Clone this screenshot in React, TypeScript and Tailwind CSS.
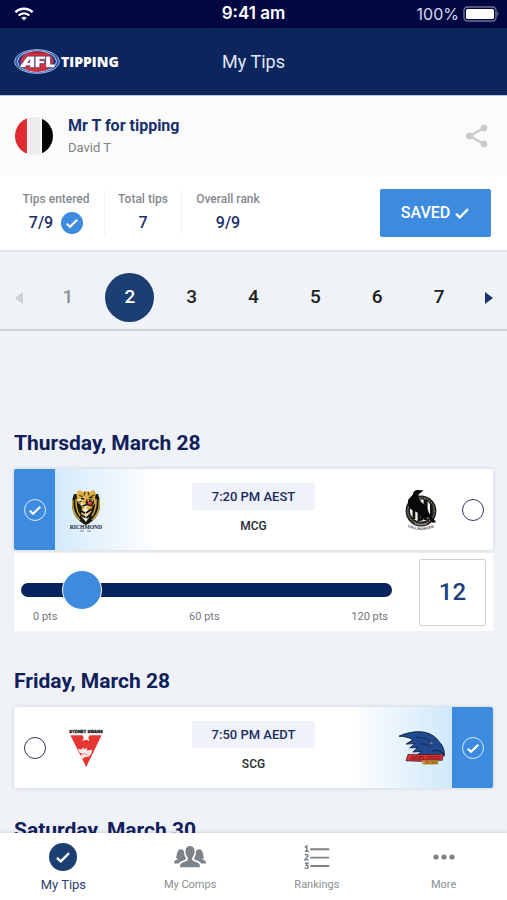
import { useState } from "react";
import type { ReactNode } from "react";
import clsx from "clsx";

const ROUNDS = [1, 2, 3, 4, 5, 6, 7];

function Check({ className }: { className?: string }) {
  return (
    <svg viewBox="0 0 16 16" fill="none" className={className} aria-hidden="true">
      <path d="M2 8.8 5.8 12.400 14 4.200" stroke="currentColor" strokeWidth="2.400" />
    </svg>
  );
}

function StatusBar() {
  return (
    <div className="grid h-7 shrink-0 grid-cols-3 items-center bg-[#020742] px-2 text-white">
      <svg viewBox="0 0 20 14" className="ml-1.5 h-3.5 w-5" fill="none" stroke="#fff" strokeWidth="2.4" aria-hidden="true">
        <path d="M1.4 5.2C6.2.5 13.8.5 18.6 5.2" />
        <path d="M4.6 8.5c3-2.9 7.8-2.9 10.8 0" />
        <path d="M7.3 10.7c1.6-1.4 3.8-1.4 5.4 0L10 13.6z" fill="#fff" stroke="none" />
      </svg>
      <span className="text-center font-['Inter',sans-serif] text-[17px] font-semibold whitespace-nowrap">9:41 am</span>
      <span className="flex items-center justify-end gap-1 font-['Inter',sans-serif] text-base text-[#d6daf0]">
        100%
        <svg viewBox="0 0 36 16" className="h-4 w-9" aria-hidden="true">
          <rect x="1" y="1" width="32" height="14" rx="3.5" fill="none" stroke="#6d7194" strokeWidth="1.4" />
          <rect x="3" y="3" width="28" height="10" rx="1.5" fill="#fff" />
          <path d="M34.3 5.6c1.6.8 1.6 4 0 4.8z" fill="#6d7194" />
        </svg>
      </span>
    </div>
  );
}

function AflLogo() {
  return (
    <svg viewBox="0 0 46 25" className="h-[25px] w-[46px]" role="img" aria-label="AFL">
      <ellipse cx="23" cy="12.5" rx="22.3" ry="11.8" fill="#2a56a8" stroke="#9fb8e8" strokeWidth="1" />
      <ellipse cx="23" cy="12.5" rx="19.6" ry="10.6" fill="#1c3f8d" stroke="#c9d8f5" strokeWidth=".9" />
      <ellipse cx="23" cy="12.5" rx="16.5" ry="10.2" fill="#d22f41" />
      <path d="M17 3.6h12M19 2.2v2.8M22 2v3M25 2v3M28 2.2v2.8" stroke="#8f2138" strokeWidth=".7" />
      <g fill="#fff" stroke="#17306f" strokeWidth=".5">
        <path d="M5 18.4 13.200 7.200h7.400v11.200h-4.800v-2h-3.300l-1.400 2zM13.700 13.600h2.100v-2.900z" fillRule="evenodd" />
        <path d="M21.200 7.200h10.200v3h-5.600v1.500h4.600v2.800h-4.600v3.900h-4.600z" />
        <path d="M31.800 7.200h4.600v8h4.600v3.200h-9.200z" />
      </g>
    </svg>
  );
}

function RichmondLogo() {
  return (
    <svg viewBox="0 0 34 44" className="h-11 w-[34px]" role="img" aria-label="Richmond">
      <path d="M5 6c8 1 16 1 24 0 4 10 3 24-12 31C2 30 1 16 5 6z" fill="#1a1812" />
      <path d="M3.800 12c-.7 8 1.200 15 7.200 20M30.200 12c.7 8-1.200 15-7.200 20M7 11c-.3 7 .6 12 4 17M27 11c.3 7-.6 12-4 17" stroke="#c9a437" strokeWidth="1.500" fill="none" />
      <path d="M7.500 4.500 10 2l4 1.800c2-.8 5-.8 7 0L25 1.800l2 3.700-1 4.200 1.400 5-4 3-1.200 6L17 34l-5-6 1-9-5-6z" fill="#dcb142" />
      <path d="M8.500 12c2-2 4-1.500 5.500.5L12 17l4 2-3 5 4 2-4 3 4 4.500 3-4-1-3 2-4-4-2 2-4-5-1z" fill="#f5f1e2" />
      <path d="M10 7.500l3.500 1M16 3.800l-1 3.500M19 3.800l1 3.500M25.500 7l-3.500 1.400M10 14l3-1" stroke="#3a2e12" strokeWidth="1.100" />
      <path d="M11 22.500l5 2.500M12 27l4.500 2.500M22.500 21l-5.500 4M22.500 25.500l-5 4.500M13.500 18l4.500-1.500" stroke="#15130f" strokeWidth="1.700" />
      <path d="M12 10.500l3 .5M20 9.800l3.500-.6" stroke="#15130f" strokeWidth="1.400" />
      <path d="M17.500 11.500h7l.8 3.200-2.800 3.800-4.500-1.200-1.400-3z" fill="#3b1a14" />
      <path d="M18.800 14l4.200-.4-.7 3.100-3-.5z" fill="#d5543f" />
      <path d="M18.200 12l1 2 .8-2zM22.500 12l.8 1.800.8-1.800z" fill="#fff" />
      <text x="17" y="41" textAnchor="middle" fontFamily="Liberation Serif, serif" fontWeight="700" fontSize="5.600" fill="#15202e">RICHMOND</text>
      <path d="M11 43h4M18 43h4" stroke="#7c8791" strokeWidth="1" />
    </svg>
  );
}

function CollingwoodLogo() {
  return (
    <svg viewBox="0 0 34 44" className="h-11 w-[34px]" role="img" aria-label="Collingwood">
      <circle cx="17" cy="23" r="15.400" fill="#24231f" />
      <circle cx="17" cy="23" r="13.200" fill="none" stroke="#88857a" strokeWidth="1.200" strokeDasharray="1.600 1" />
      <circle cx="17" cy="22.500" r="11" fill="#f4f4f2" />
      <path d="M8.500 17h2.800v14H8.500zM13.600 12h3.200v21h-3.200zM19.600 12h4v20h-4zM26 16h2.400v12H26z" fill="#141414" />
      <path d="M19.500 2.600 14.500 2c-3.200-.3-5.400 1.200-5.700 4.500L4.400 11.600c-1.400 4 .2 8.600 4.600 11l6.500 3 1.800 4.400-3.500 2.600h5l1.400-3 4-.2 4 5.400 4-.6-7.400-9.400c-1.200-5-4.300-8.600-9.600-12.400l-.7-5.800z" fill="#080808" />
      <path d="M11 35.600q6 2.200 12 0" stroke="#8b897f" strokeWidth="1.200" fill="none" />
      <path id="collingwood-ribbon" d="M2 38q15 8 30 0" fill="none" />
      <text fontFamily="Liberation Sans, sans-serif" fontWeight="700" fontSize="3.600" fill="#444">
        <textPath href="#collingwood-ribbon" startOffset="50%" textAnchor="middle">COLLINGWOOD</textPath>
      </text>
    </svg>
  );
}

function SydneyLogo() {
  return (
    <svg viewBox="0 0 34 40" className="h-10 w-[34px]" role="img" aria-label="Sydney Swans">
      <text x="17" y="5" textAnchor="middle" fontFamily="Liberation Sans, sans-serif" fontWeight="700" fontSize="4.200" fill="#111" stroke="#111" strokeWidth=".3">SYDNEY SWANS</text>
      <path d="M1.400 7.200h12l1.400 2.600-1.400 3 3.600-1 3.600 1-1.400-3 1.400-2.600h12L17.200 39z" fill="#e63633" />
      <path d="M8.800 21l3.600.4 1.800-2.200.8 2.400 3.400-2-.8 3 5.600-.8-1.200 4.600-2.400 2.200-4 .6-2 1.800-2.200-3.600 2.200-1.800-2.600-.6z" fill="#fbeceb" />
      <path d="M13 27l2.500-2 1.200 2 3-1.800" stroke="#e98e8a" strokeWidth=".9" fill="none" />
    </svg>
  );
}

function AdelaideLogo() {
  return (
    <svg viewBox="0 0 48 34" className="h-[34px] w-12" role="img" aria-label="Adelaide Crows">
      <path d="M1 5.2C8 2 15 .4 22.600.8c8.400.4 14.600 4.400 18 9.400 3.600 3.200 6 8 5.800 14.600L43 22l-4.600 1.600-18.600-.2 3.800-3-8.800.6 5-4.400-8 .2 5.400-4.200-9 .4 7-4.400C10 6.200 5.600 5.200 1 5.200z" fill="#1f4a90" stroke="#16294f" strokeWidth="1" />
      <path d="M18 6.400c6-.4 12 1 15.500 5.200M21 13c4-.4 8 .6 11 3.200" stroke="#183566" strokeWidth="1.200" fill="none" />
      <path d="M31.500 10.800l3.500 1.200-1.600 1z" fill="#c99c4a" />
      <path d="M34 20.500c4-2 8-1.500 11.500 2.500" stroke="#16294f" strokeWidth="1.200" fill="none" />
      <path d="M10 23.400h35.600l-1.400 5.800-19 1.200-17.200-.6z" fill="#d8322f" stroke="#3a2348" strokeWidth=".8" />
      <text x="27" y="28.800" textAnchor="middle" fontFamily="Liberation Sans, sans-serif" fontStyle="italic" fontWeight="700" fontSize="6" fill="#8b1820">ADELAIDE</text>
      <path d="M24 29.600h17l-1.400 3.600H24.800z" fill="#e8b33f" stroke="#9c7a34" strokeWidth=".5" />
      <text x="32.400" y="32.800" textAnchor="middle" fontFamily="Liberation Sans, sans-serif" fontWeight="700" fontSize="3.600" fill="#7b3a20">CROWS</text>
    </svg>
  );
}

function Stat({ label, className, children }: { label: string; className?: string; children: ReactNode }) {
  return (
    <div className={clsx("flex h-11 flex-col items-center justify-between", className)}>
      <dt className="text-xs leading-4 font-medium whitespace-nowrap text-[#85888f]">{label}</dt>
      <dd className="flex items-center gap-2 text-base leading-6 font-medium text-[#1c2f66]">{children}</dd>
    </div>
  );
}

interface PickProps {
  game: string;
  team: string;
  checked: boolean;
  onPick: () => void;
}

function Pick({ game, team, checked, onPick }: PickProps) {
  return (
    <label className={clsx("relative flex w-[41px] items-center justify-center", checked && "bg-[#3d8bdf]")}>
      <input
        type="radio"
        name={game}
        aria-label={team}
        checked={checked}
        onChange={onPick}
        className="size-[22px] appearance-none rounded-full border-[1.5px] border-[#33376b] checked:border-[#d9ecff]"
      />
      {checked && <Check className="pointer-events-none absolute size-3.5 text-white" />}
    </label>
  );
}

interface MatchProps {
  id: string;
  time: string;
  venue: string;
  home: string;
  away: string;
  homeLogo: ReactNode;
  awayLogo: ReactNode;
  tip: "home" | "away";
}

function Match({ id, time, venue, home, away, homeLogo, awayLogo, tip }: MatchProps) {
  const [pick, setPick] = useState(tip);

  return (
    <div className="flex h-[81px] overflow-hidden rounded-xs bg-white shadow-[0_0_4px_rgba(40,60,100,0.18)]">
      <Pick game={id} team={home} checked={pick === "home"} onPick={() => setPick("home")} />
      <div
        className={clsx(
          "flex w-[100px] items-center pl-3.5",
          pick === "home" && "bg-linear-to-r from-[#d3eafb] to-white",
        )}
      >
        {homeLogo}
      </div>
      <div className="flex flex-1 flex-col items-center justify-center gap-1.5">
        <span className="w-[123px] rounded-xs bg-[#eff2f8] text-center text-[13px] leading-[27px] font-medium text-[#1b2c63]">
          {time}
        </span>
        <span className="text-xs leading-5 font-medium text-[#25272e]">{venue}</span>
      </div>
      <div
        className={clsx(
          "flex w-[100px] items-center justify-end",
          pick === "away" ? "bg-linear-to-l from-[#cfe8fa] to-white pr-1.5" : "pr-3.5",
        )}
      >
        {awayLogo}
      </div>
      <Pick game={id} team={away} checked={pick === "away"} onPick={() => setPick("away")} />
    </div>
  );
}

function Margin() {
  const [margin, setMargin] = useState(12);

  return (
    <div className="mt-[3px] flex h-[78px] items-center bg-white px-[7px]">
      <div className="flex-1 pt-6">
        <div className="flex h-3.5 items-center rounded-full bg-[#08245e] px-2.5">
          <input
            type="range"
            min={0}
            max={120}
            value={margin}
            aria-label="Winning margin"
            onChange={(e) => setMargin(Number(e.target.value))}
            className="h-10 w-full appearance-none bg-transparent [&::-webkit-slider-thumb]:size-10 [&::-webkit-slider-thumb]:appearance-none [&::-webkit-slider-thumb]:rounded-full [&::-webkit-slider-thumb]:border [&::-webkit-slider-thumb]:border-white [&::-webkit-slider-thumb]:bg-[#3d8bdf]"
          />
        </div>
        <div className="mt-3 flex justify-between pr-1 pl-3 text-[11px] leading-4 text-[#74777d]">
          <span>0 pts</span>
          <span>60 pts</span>
          <span>120 pts</span>
        </div>
      </div>
      <input
        type="text"
        inputMode="numeric"
        aria-label="Margin in points"
        value={margin}
        onChange={(e) => setMargin(Number(e.target.value) || 0)}
        className="ml-[27px] size-[67px] rounded-xs border-[1.5px] border-[#cfd2d6] text-center text-2xl font-medium text-[#1b3f7b]"
      />
    </div>
  );
}

function DayHeading({ children }: { children: ReactNode }) {
  return <h2 className="mb-3 text-[21px] leading-7 font-bold text-[#10205b]">{children}</h2>;
}

function CompsIcon() {
  return (
    <svg viewBox="0 0 32 22" className="h-[22px] w-8" fill="currentColor" aria-hidden="true">
      <path d="M16 0c3 0 4.600 2 4.600 5 0 2.600-.9 5-2.300 6.400-.3 1.800-.1 2.900 1.200 3.500l4.400 1.800c1.600.7 2.100 2.400 2.100 4.500H6c0-2.100.5-3.800 2.100-4.500l4.400-1.800c1.300-.6 1.500-1.700 1.200-3.500C12.300 10 11.400 7.600 11.400 5c0-3 1.600-5 4.600-5z" />
      <path d="M6.400 3.200c1.800 0 3 .7 3.600 2 0 2.800.7 5.200 2 7.100-.2.800-.5 1.200-1.100 1.500l-4 1.700c-1 .5-1.600 1.100-2 1.900H0c0-1.800.6-3 1.900-3.500l2.500-1c-1-.1-1.900-.4-2.500-.9C3.200 10.500 2.400 3.200 6.400 3.200z" />
      <path d="M25.600 3.200c-1.800 0-3 .7-3.600 2 0 2.800-.7 5.200-2 7.100.2.800.5 1.200 1.100 1.500l4 1.700c1 .5 1.600 1.100 2 1.900H32c0-1.800-.6-3-1.900-3.500l-2.500-1c1-.1 1.900-.4 2.500-.9-1.300-1.500-.5-8.800-4.500-8.800z" />
    </svg>
  );
}

function RankingsIcon() {
  return (
    <svg viewBox="0 0 26 24" className="h-6 w-[26px]" fill="none" stroke="currentColor" aria-hidden="true">
      <path d="M7 4.200h17.500M7 12.600h17.500M7 21h17.500" strokeWidth="1.900" strokeLinecap="round" />
      <path d="M.8 2.400 2.800 1v5.300M.8 6.300h4M.9 10.300c.8-1.300 3.400-1 3 .7C3.600 12.200 1.600 13 1 14.700h3.500M.9 18.200h3L2.300 20.200c2.400 0 2.500 3.300.2 3.300-.8 0-1.400-.3-1.700-.8" strokeWidth="1.500" />
    </svg>
  );
}

const TABS = [
  {
    label: "My Tips",
    icon: (
      <span className="flex size-7 items-center justify-center rounded-full bg-[#1b3f73]">
        <Check className="size-4 text-white" />
      </span>
    ),
  },
  { label: "My Comps", icon: <CompsIcon /> },
  { label: "Rankings", icon: <RankingsIcon /> },
  {
    label: "More",
    icon: (
      <svg viewBox="0 0 22 6" className="h-1.5 w-[22px]" fill="currentColor" aria-hidden="true">
        <circle cx="3" cy="3" r="2.6" />
        <circle cx="11" cy="3" r="2.6" />
        <circle cx="19" cy="3" r="2.6" />
      </svg>
    ),
  },
];

export default function App() {
  const [round, setRound] = useState(2);

  return (
    <div className="flex h-screen flex-col overflow-hidden bg-[#eff2f7] font-['Roboto',sans-serif]">
      <StatusBar />

      <header className="grid h-[68px] shrink-0 grid-cols-[1fr_auto_1fr] items-center border-b border-[#b3c2e6] bg-[#0c265d] px-3.5 text-white">
        <div className="flex items-center gap-px">
          <AflLogo />
          <span className="font-['Open_Sans',sans-serif] text-[14px] font-extrabold">TIPPING</span>
        </div>
        <h1 className="text-lg font-normal text-[#dfe7f7]">My Tips</h1>
      </header>

      <section className="flex h-[79px] shrink-0 items-center bg-[#fbfbfb] px-3.5">
        {/* Club colours */}
        <svg viewBox="0 0 40 40" className="size-10" aria-hidden="true">
          <clipPath id="club-badge">
            <circle cx="20" cy="20" r="19" />
          </clipPath>
          <g clipPath="url(#club-badge)">
            <path d="M0 0h40v40H0z" fill="#ececec" />
            <path d="M0 0h13v40H0z" fill="#e02b2e" />
            <path d="M28 0h12v40H28z" fill="#050505" />
            <path d="M13 0h1v40h-1zM26.5 0h1.5v40h-1.500z" fill="#fff" />
          </g>
        </svg>
        <div className="ml-3.5 flex-1">
          <p className="text-base leading-6 font-bold text-[#17306b]">Mr T for tipping</p>
          <p className="text-[13px] leading-5 text-[#7f8287]">David T</p>
        </div>
        <button type="button" aria-label="Share" className="mr-1">
          <svg viewBox="0 0 24 24" className="size-6" fill="#c9cacd" stroke="#c9cacd" aria-hidden="true">
            <path d="M19 4 4.500 12 19 20" fill="none" strokeWidth="2" />
            <circle cx="19" cy="4" r="3" />
            <circle cx="4.500" cy="12" r="3" />
            <circle cx="19" cy="20" r="3" />
          </svg>
        </button>
      </section>

      <section className="flex h-[77px] shrink-0 items-center justify-between border-b-2 border-[#dfe0e3] bg-white pr-4 pl-2">
        <dl className="flex">
          <Stat label="Tips entered" className="w-24">
            7/9
            <span className="flex size-[22px] items-center justify-center rounded-full bg-[#3d8bdf]">
              <Check className="size-3.5 text-white" />
            </span>
          </Stat>
          <Stat label="Total tips" className="w-[78px] border-x border-[#f1f2f4]">
            7
          </Stat>
          <Stat label="Overall rank" className="w-[92px]">
            9/9
          </Stat>
        </dl>
        <button
          type="button"
          className="flex h-12 w-[111px] items-center justify-center gap-1 rounded-xs bg-[#3d8bdf] text-base font-medium text-white"
        >
          SAVED
          <Check className="size-4" />
        </button>
      </section>

      <nav aria-label="Rounds" className="flex h-[79px] shrink-0 items-center border-b-2 border-[#cdd0d6] pt-3.5">
        <button type="button" aria-label="Previous round" className="flex w-[37px] justify-center text-[#cdcfd3]">
          <svg viewBox="0 0 8 12" className="h-3 w-2" fill="currentColor">
            <path d="M8 0v12L0 6z" />
          </svg>
        </button>
        {ROUNDS.map((n) => (
          <div key={n} className="flex flex-1 justify-center">
            <button
              type="button"
              onClick={() => setRound(n)}
              className={clsx(
                "size-[49px] rounded-full text-[19px] font-medium",
                n === round && "bg-[#1b3f73] text-white",
                n !== round && (n < 2 ? "text-[#8f9196]" : "text-[#1d1f24]"),
              )}
            >
              {n}
            </button>
          </div>
        ))}
        <button type="button" aria-label="Next round" className="flex w-[37px] justify-center text-[#17356f]">
          <svg viewBox="0 0 8 12" className="h-3 w-2" fill="currentColor">
            <path d="M0 0v12l8-6z" />
          </svg>
        </button>
      </nav>

      <main className="min-h-0 flex-1 overflow-hidden px-3.5 pt-[98px]">
        <section className="mb-9">
          <DayHeading>Thursday, March 28</DayHeading>
          <Match
            id="richmond-collingwood"
            time="7:20 PM AEST"
            venue="MCG"
            home="Richmond"
            away="Collingwood"
            homeLogo={<RichmondLogo />}
            awayLogo={<CollingwoodLogo />}
            tip="home"
          />
          <Margin />
        </section>

        <section className="mb-7">
          <DayHeading>Friday, March 28</DayHeading>
          <Match
            id="sydney-adelaide"
            time="7:50 PM AEDT"
            venue="SCG"
            home="Sydney Swans"
            away="Adelaide Crows"
            homeLogo={<SydneyLogo />}
            awayLogo={<AdelaideLogo />}
            tip="away"
          />
        </section>

        <section>
          <DayHeading>Saturday, March 30</DayHeading>
        </section>
      </main>

      <nav
        aria-label="Main"
        className="grid h-[67px] shrink-0 grid-cols-4 bg-white pt-2 shadow-[0_0_4px_rgba(40,60,100,0.25)]"
      >
        {TABS.map(({ label, icon }, i) => (
          <a
            key={label}
            href="#"
            className={clsx(
              "flex flex-col items-center gap-1",
              i === 0 ? "text-[13px] text-[#2b3f70]" : "text-[11px] text-[#8b8e92]",
            )}
          >
            <span className="flex h-8 items-center text-[#7d8489]">{icon}</span>
            <span className="leading-4">{label}</span>
          </a>
        ))}
      </nav>
    </div>
  );
}
